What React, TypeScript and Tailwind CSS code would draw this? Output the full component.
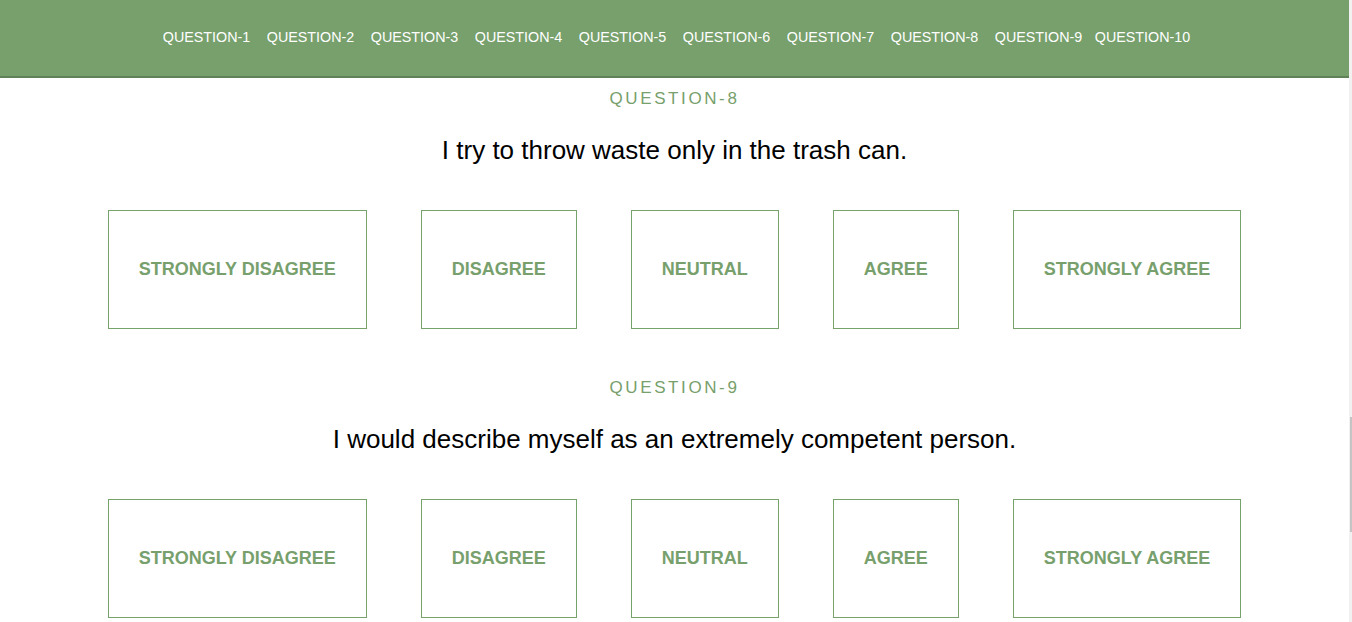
import React from "react";

const navItems = Array.from({ length: 10 }, (_, i) => `QUESTION-${i + 1}`);
const options = ["STRONGLY DISAGREE", "DISAGREE", "NEUTRAL", "AGREE", "STRONGLY AGREE"];

const questions = [
  { n: 8, text: "I try to throw waste only in the trash can." },
  { n: 9, text: "I would describe myself as an extremely competent person." },
];

function Question({ n, text }: { n: number; text: string }) {
  return (
    <section className="flex flex-col items-center">
      <h3 className="text-[17px] leading-[20px] tracking-[2.6px] text-[#77a06c] font-normal">
        QUESTION-{n}
      </h3>
      <p className="mt-[26px] text-[26px] leading-[30px] text-black">{text}</p>
      <div className="mt-[45px] flex justify-center gap-[54px]">
        {options.map((o) => (
          <button
            key={o}
            className="border border-[#76a36a] bg-white px-[30px] pb-[2px] h-[119px] text-[18px] font-bold text-[#77a06c] leading-none"
          >
            {o}
          </button>
        ))}
      </div>
    </section>
  );
}

export default function App() {
  return (
    <div
      className="flex h-[622px] w-full overflow-hidden bg-white"
      style={{ fontFamily: '"Liberation Sans", Arial, sans-serif' }}
    >
      <div className="flex-1 flex flex-col">
        <header className="h-[78px] shrink-0 bg-[#77a06c] border-b-2 border-[#5f8356] flex items-center justify-center pb-[2px]">
          <nav className="flex">
            {navItems.map((q) => (
              <a key={q} className="w-[104px] text-center text-[14.3px] text-white leading-none">
                {q}
              </a>
            ))}
          </nav>
        </header>
        <main className="flex flex-col gap-[49px] pt-[11px]">
          {questions.map((q) => (
            <Question key={q.n} n={q.n} text={q.text} />
          ))}
        </main>
      </div>
      <aside className="w-[3px] shrink-0 bg-[#f1f1f1] flex flex-col">
        <div className="mt-[417px] h-[115px] w-[2px] ml-[1px] bg-[#c4c4c4]" />
      </aside>
    </div>
  );
}
